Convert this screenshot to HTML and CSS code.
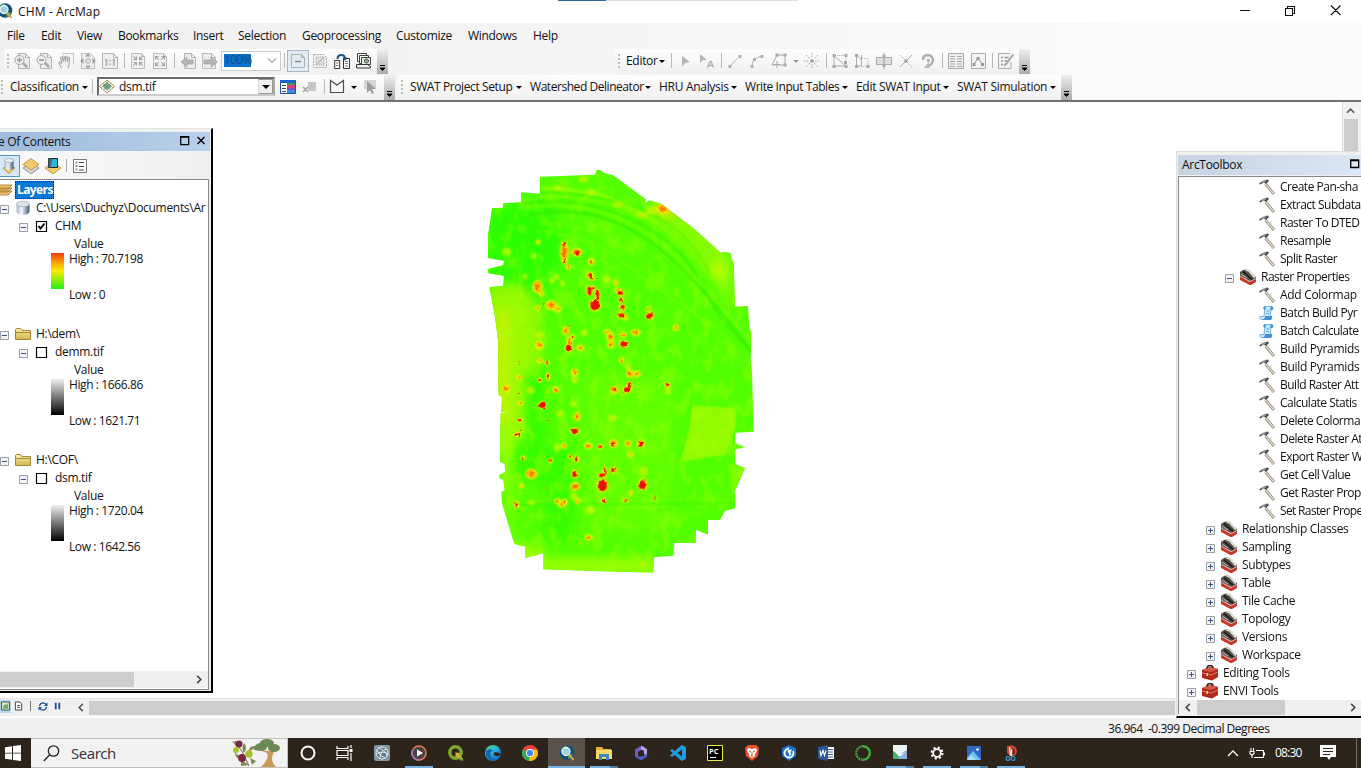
FILE: index.html
```html
<!DOCTYPE html>
<html lang="en">
<head>
<meta charset="utf-8">
<title>CHM - ArcMap</title>
<link rel="stylesheet" href="styles.css">
</head>
<body>
<svg class="defs" width="0" height="0">
  <defs>
    <linearGradient id="cyl"><stop offset="0" stop-color="#a9b4c4"/><stop offset=".4" stop-color="#f4f7fa"/><stop offset="1" stop-color="#3f5878"/></linearGradient>
    <linearGradient id="fold" x2="0" y2="1"><stop offset="0" stop-color="#f8efb0"/><stop offset="1" stop-color="#d3b64a"/></linearGradient>
    <linearGradient id="edgeg" x1="0" y1="0" x2="1" y2="1"><stop offset="0" stop-color="#4fd36a"/><stop offset=".4" stop-color="#2fb8d8"/><stop offset="1" stop-color="#0b57b0"/></linearGradient>
  </defs>
  <symbol id="page" viewBox="0 0 16 16"><path d="M4.500 .5h7l4 4v11h-11zM11.500 .5v4h4" fill="#ededed" stroke="#b3b3b3"/></symbol>
  <symbol id="zin" viewBox="0 0 16 16"><use href="#page"/><circle cx="5.500" cy="7" r="4.500" fill="#f0f0f0" stroke="#a6a6a6"/><path d="M9 10l4 4" stroke="#a6a6a6" stroke-width="2.500"/><path d="M3 7h5M5.500 4.500v5" stroke="#999" stroke-width="1.600"/></symbol>
  <symbol id="zout" viewBox="0 0 16 16"><use href="#page"/><circle cx="5.500" cy="7" r="4.500" fill="#f0f0f0" stroke="#a6a6a6"/><path d="M9 10l4 4" stroke="#a6a6a6" stroke-width="2.500"/><path d="M3 7h5" stroke="#999" stroke-width="1.600"/></symbol>
  <symbol id="hand" viewBox="0 0 16 16"><path d="M4.500 .5h11v11" fill="none" stroke="#c4c4c4"/><path d="M3.500 15.500L.8 9.500q1-1.500 3 1L2.500 4.500q1-1 1.500 0l1.500 4-.8-5q1-1 1.600 0l1.200 5V3.500q1-1 1.600 0l.3 5 .7-4q1-1 1.500 0L11 12l-1 3.500" fill="#efefef" stroke="#a0a0a0"/></symbol>
  <symbol id="full" viewBox="0 0 16 16"><path d="M1.500 .5h9l4 4v11h-13z" fill="#efefef" stroke="#bbb"/><path d="M8 0l3 3.500H5zM8 16l3-3.500H5zM0 8l3.500-3v6zM16 8l-3.500-3v6z" fill="#a3a3a3"/><circle cx="8" cy="8" r="2.500" fill="#ddd" stroke="#bbb"/></symbol>
  <symbol id="one" viewBox="0 0 16 16"><path d="M.5 .5h11l4 4v11H.5zM11.500 .5v4h4" fill="#efefef" stroke="#b3b3b3"/><path d="M4.500 6v7M3 7h1.500M12 6v7M10.500 7H12M8 7v1.500M8 10.500V12" fill="none" stroke="#aaa" stroke-width="1.500"/></symbol>
  <symbol id="inw" viewBox="0 0 16 16"><path d="M1.500 .5h10l3 3v12h-13zM11.500 .5v3h3" fill="#f0f0f0" stroke="#bbb"/><path d="M7 3v4H3zM9 3v4h4zM7 13V9H3zM9 13V9h4z" fill="#a3a3a3"/><path d="M3 3l3 3M13 3l-3 3M3 13l3-3M13 13l-3-3" stroke="#a3a3a3"/></symbol>
  <symbol id="outw" viewBox="0 0 16 16"><path d="M1.500 .5h10l3 3v12h-13zM11.500 .5v3h3" fill="#f0f0f0" stroke="#bbb"/><path d="M3 3h4L3 7zM13 3H9l4 4zM3 13h4L3 9zM13 13H9l4-4z" fill="#a3a3a3"/><path d="M4 4l3 3M12 4L9 7M4 12l3-3M12 12L9 9" stroke="#a3a3a3"/></symbol>
  <symbol id="prev" viewBox="0 0 16 16"><use href="#page"/><path d="M1 9l6-5v3h6v4H7v3z" fill="#b5b5b5" stroke="#999" stroke-width=".6"/></symbol>
  <symbol id="next" viewBox="0 0 16 16"><path d="M.5 .5h9l4 4v11H.5zM9.500 .5v4h4" fill="#ededed" stroke="#bbb"/><path d="M15.500 9L9 4v3H2v4h7v3z" fill="#b5b5b5" stroke="#999" stroke-width=".6"/></symbol>
  <symbol id="draft" viewBox="0 0 16 16"><path d="M1.500 1.500h10l3 3v10h-13zM11.500 1.500v3h3" fill="none" stroke="#a8b0b8"/><path d="M5 8.500h6" stroke="#888" stroke-width="1.500"/></symbol>
  <symbol id="focus" viewBox="0 0 16 16"><path d="M1.500 1.500h10l3 3v10h-13z" fill="#f0f0f0" stroke="#a8a8a8" stroke-dasharray="2 1"/><path d="M4 4h8v8H4z" fill="#ddd" stroke="#aaa" stroke-dasharray="1 1"/><path d="M4 12l8-8" stroke="#aaa"/></symbol>
  <symbol id="chg" viewBox="0 0 16 16"><path d="M.7 7.500h5v8h-5zM9.500 5.500h6v10h-6z" fill="#fff" stroke="#333"/><path d="M2 10h2.500M2 12.500h2.500M11 8.500h3M11 10.500h3M11 13h3" stroke="#777"/><path d="M3.500 6q0-4 4-4 3 0 3.500 3" fill="none" stroke="#1c5683" stroke-width="2"/><path d="M8.500 4.500h5L11 8z" fill="#1c5683"/></symbol>
  <symbol id="ddp" viewBox="0 0 16 16"><path d="M1.500.5h9v8h-9z" fill="#fff" stroke="#444"/><path d="M3.500 2.500h9v8h-9z" fill="#fff" stroke="#444"/><path d="M5.500 4.500h9v7h-9z" fill="#e5eedb" stroke="#444"/><circle cx="10.500" cy="8" r="2" fill="#9ab779" stroke="#456"/><path d="M.5 11.500h11l3 2v1.500H.5z" fill="#eee" stroke="#333"/></symbol>
  <symbol id="arrow" viewBox="0 0 16 16"><path d="M5 3v11l3-4 5-1z" fill="#b5b5b5"/></symbol>
  <symbol id="arrowa" viewBox="0 0 16 16"><path d="M1 1v9l3-3h4z" fill="#b5b5b5"/><path d="M8.500 14.500l2.500-6h1l2.500 6M9 12.500h5" fill="none" stroke="#b0b0b0" stroke-width="1.500"/></symbol>
  <symbol id="seg" viewBox="0 0 16 16"><path d="M3 13L13 3" stroke="#b5b5b5"/><path d="M1.500 12h3v3h-3zM11.500 2h3v3h-3z" fill="#b0b0b0"/></symbol>
  <symbol id="arc" viewBox="0 0 16 16"><path d="M3 13Q3 5 13 3" fill="none" stroke="#b5b5b5"/><path d="M1.500 12h3v3h-3zM11.500 2h3v3h-3zM4 5h3v3H4z" fill="#b0b0b0"/></symbol>
  <symbol id="trace" viewBox="0 0 16 16"><path d="M6 2h8v10H8M6 2L1 12h3M6 8v7M3 11.500h6" fill="none" stroke="#a8a8a8"/><path d="M4.500.5h3v3h-3zM12.500.5h3v3h-3zM12.500 10.500h3v3h-3z" fill="#aaa"/></symbol>
  <symbol id="burst" viewBox="0 0 16 16"><path d="M8 0v5M8 11v5M0 8h5M11 8h5M2 2l4 4M10 10l4 4M14 2l-4 4M6 10l-4 4" stroke="#adadad" stroke-dasharray="1.500 1"/><path d="M6.500 6.500h3v3h-3z" fill="#999"/></symbol>
  <symbol id="editv" viewBox="0 0 16 16"><path d="M2 2v11h12L2 3" fill="none" stroke="#aaa"/><path d="M3 2.500h11V12" fill="none" stroke="#aaa" stroke-dasharray="1 1"/><path d="M.5 1h3v3h-3zM12.500 1h3v3h-3zM12.500 12h3v3h-3zM.5 12h3v3h-3zM12 8h3v3h-3z" fill="#aaa"/></symbol>
  <symbol id="resh" viewBox="0 0 16 16"><path d="M2.500 2v11h5V2M2.500 2l5 5" fill="none" stroke="#aaa"/><path d="M8 5.500h6v8H8" fill="none" stroke="#aaa" stroke-dasharray="1 1"/><path d="M1 1h3v3H1zM1 12h3v3H1zM12.500 12h3v3h-3z" fill="#aaa"/></symbol>
  <symbol id="cut" viewBox="0 0 16 16"><path d="M.5 4.500h15v7H.5z" fill="#ddd" stroke="#aaa"/><path d="M8 0v16" stroke="#999"/><path d="M6.500 2h3v3h-3zM6.500 11h3v3h-3z" fill="#aaa"/></symbol>
  <symbol id="split" viewBox="0 0 16 16"><path d="M2 14L14 2" stroke="#aaa"/><path d="M2 2l12 12" stroke="#bbb" stroke-dasharray="2 1"/><path d="M6.500 6.500h3v3h-3z" fill="#999"/></symbol>
  <symbol id="rot" viewBox="0 0 16 16"><path d="M3 7q0-5 5-5 5 1 5 5.500Q12 12 8 13" fill="none" stroke="#b0b0b0" stroke-width="2.500"/><path d="M9 9v6H4zM7 6h3v3H7z" fill="#b5b5b5"/></symbol>
  <symbol id="attr" viewBox="0 0 16 16"><path d="M.5 .5h15v15H.5z" fill="#eee" stroke="#aaa"/><path d="M2 3.500h5M9 3.500h5M2 6h5M9 6h5M2 8.500h5M9 8.500h5M2 11h5M9 11h5M2 13.500h5M9 13.500h5" stroke="#aaa"/></symbol>
  <symbol id="sketch" viewBox="0 0 16 16"><path d="M1.500 .5h14v15h-14z" fill="#f3f3f3" stroke="#aaa"/><path d="M4 11l4-6 4 6" fill="none" stroke="#999"/><path d="M2.500 10h3v3h-3zM6.500 4h3v3h-3zM11 10h3v3h-3z" fill="#999"/></symbol>
  <symbol id="create" viewBox="0 0 16 16"><path d="M13 9v6.500H.5V.5h12" fill="#f3f3f3" stroke="#aaa"/><path d="M3 4.500h2M3 8h2M3 11.500h2M6.500 4.500h4M6.500 8h3" stroke="#999" stroke-width="1.500"/><path d="M15.500 1L8 11l-2 2" stroke="#aaa" stroke-width="2"/></symbol>
  <symbol id="minus" viewBox="0 0 9 9"><path d="M.5.5h8v8h-8z" fill="#f3f3f6" stroke="#9a9fa6"/><path d="M2 4.500h5" stroke="#3c5688"/></symbol>
  <symbol id="plus" viewBox="0 0 9 9"><path d="M.5.5h8v8h-8z" fill="#f3f3f6" stroke="#9a9fa6"/><path d="M2 4.500h5M4.500 2v5" stroke="#3c5688"/></symbol>
  <symbol id="db" viewBox="0 0 16 16"><path d="M1.500 4v8q1.500 3 6.500 3t6.500-3V4" fill="url(#cyl)"/><ellipse cx="8" cy="4" rx="6.500" ry="2.800" fill="#dce4ec" stroke="#99a6b5" stroke-width=".7"/></symbol>
  <symbol id="folder" viewBox="0 0 16 16"><path d="M.5 13.500v-10l1-1h4l1.500 2h8.500v9z" fill="url(#fold)" stroke="#a18831"/><path d="M1 6.500h14" stroke="#a18831"/></symbol>
  <symbol id="hammer" viewBox="0 0 16 16"><path d="M6.500 5l8.500 10" stroke="#8a8271" stroke-width="2.800"/><path d="M6.500 5L15 15" stroke="#e8e0cf" stroke-width="1.200"/><path d="M0 5q3-4 9-4.500l1 1.500-3 3-2-1.500L1 5.500z" fill="#4d5152"/><path d="M3 3.500l4-2" stroke="#b9c0c0"/></symbol>
  <symbol id="script" viewBox="0 0 16 16"><path d="M6 1.500h7l-1 4-1 6-1 3H2q-2-1-1-3h4z" fill="#cfe8fa" stroke="#5ba2d8" stroke-width=".8"/><path d="M6 1q-3 1-1 3.500h2zM12 1q4 1 1.500 4H11zM6 11h7q1 3-1.500 4H3q3-1 3-4z" fill="#3f92dc"/><path d="M7.500 6h3M7 8.500h3" stroke="#5a9fd2"/></symbol>
  <symbol id="tset" viewBox="0 0 16 16"><path d="M0 3l3-2 4-1 9 8v3l-5 2L0 8z" fill="#55514d"/><path d="M0 7.500L10 13l6-3v3l-5 3h-1.500L0 11z" fill="#c8382a"/><path d="M0 7l10 5.500 6-3" fill="none" stroke="#efc0b4" stroke-width=".9"/><path d="M3 2.500l9 8" stroke="#191514" stroke-width="1.500"/><path d="M5.500 1q3-.5 5 2.500l4.500 5" fill="none" stroke="#dedbd0" stroke-width="2.200"/><path d="M1 5l6 4" stroke="#c2beb6"/></symbol>
  <symbol id="tbox" viewBox="0 0 16 16"><path d="M0 5l8-3 8 2v8l-6 3.500L0 13z" fill="#b4271b"/><path d="M0 5l9 2 7-3-8-2.500z" fill="#d65a49"/><path d="M5 3.500q0-3 3-3t3 2.500" fill="none" stroke="#282322" stroke-width="1.600"/><path d="M0 8l9 2 7-3" fill="none" stroke="#ea9585" stroke-width=".8"/><path d="M4.500 8h1.500v3H4.500z" fill="#e9d6b2"/></symbol>
  <symbol id="lyr" viewBox="0 0 16 16"><path d="M0 10l8-5 8 5-8 6z" fill="#d4d8dc" stroke="#777" stroke-width=".8"/><path d="M0 6.500L8 .5l8 6L8 12z" fill="#f2ca70" stroke="#b1842f" stroke-width=".8"/></symbol>
  <symbol id="dia" viewBox="0 0 16 16"><path d="M0 10l8-5 8 5-8 6z" fill="#f2ca70" stroke="#b1842f" stroke-width=".8"/></symbol>
  <symbol id="grip" viewBox="0 0 3 16"><path d="M0 1h2v2H0zM0 5h2v2H0zM0 9h2v2H0zM0 13h2v2H0z" fill="#b9b9b9"/></symbol>
  <symbol id="lens" viewBox="0 0 16 16"><circle cx="8" cy="7.500" r="7.300" fill="#124f78"/><path d="M2 4q3-4 6-3l-2 4-4 2zM9 10q5-2 5 0-2 4-5 4z" fill="#3b946b"/><circle cx="7" cy="6.500" r="4" fill="#9bcfe2" stroke="#f2f7f7" stroke-width="1.300"/><path d="M10 9.500L14.500 15" stroke="#d5a94a" stroke-width="2"/></symbol>
</svg>

<div class="titlebar">
  <svg class="app" viewBox="0 0 16 16"><use href="#lens"/></svg>
  <span class="apptitle">CHM - ArcMap</span>
  <span class="peek"></span><span class="peek2"></span>
  <svg class="winbtns" viewBox="0 0 121 23"><path d="M11 10.500h10M56.500 8.500h7v7h-7zM58.500 8V6.500h7v7H64M102 5.500l9.500 9.500M111.500 5.500L102 15" fill="none" stroke="#111" stroke-width="1.100"/></svg>
</div>

<div class="bars">
  <div class="menu">
    <span class="m1">File</span><span class="m2">Edit</span><span class="m3">View</span><span class="m4">Bookmarks</span><span class="m5">Insert</span><span class="m6">Selection</span><span class="m7">Geoprocessing</span><span class="m8">Customize</span><span class="m9">Windows</span><span>Help</span>
  </div>
  <div class="row row1">
    <div class="tools t-layout">
      <svg class="grip"><use href="#grip"/></svg>
      <i class="b"><svg><use href="#zin"/></svg></i><i class="b"><svg><use href="#zout"/></svg></i><i class="b"><svg><use href="#hand"/></svg></i><i class="b"><svg><use href="#full"/></svg></i><i class="b"><svg><use href="#one"/></svg></i>
      <i class="sep"></i>
      <i class="b"><svg><use href="#inw"/></svg></i><i class="b"><svg><use href="#outw"/></svg></i>
      <i class="sep"></i>
      <i class="b"><svg><use href="#prev"/></svg></i><i class="b"><svg><use href="#next"/></svg></i>
      <div class="pct"><span>100%</span><svg viewBox="0 0 10 6"><path d="M1 .5l4 4 4-4" fill="none" stroke="#aaa" stroke-width="1.200"/></svg></div>
      <i class="sep"></i>
      <i class="b on"><svg><use href="#draft"/></svg></i><i class="b"><svg><use href="#focus"/></svg></i><i class="b"><svg><use href="#chg"/></svg></i><i class="b"><svg><use href="#ddp"/></svg></i>
      <i class="cap"><svg viewBox="0 0 7 8"><path d="M1 1.500h5M1 4h5L3.500 6.500z" stroke="#000" fill="#000"/></svg></i>
    </div>
    <div class="tools t-editor">
      <svg class="grip"><use href="#grip"/></svg>
      <span class="drop w-ed">Editor<b></b></span>
      <i class="sep"></i>
      <i class="b"><svg><use href="#arrow"/></svg></i><i class="b"><svg><use href="#arrowa"/></svg></i>
      <i class="sep"></i>
      <i class="b"><svg><use href="#seg"/></svg></i><i class="b"><svg><use href="#arc"/></svg></i><i class="b"><svg><use href="#trace"/></svg></i><i class="dd dim"></i><i class="b"><svg><use href="#burst"/></svg></i>
      <i class="sep"></i>
      <i class="b"><svg><use href="#editv"/></svg></i><i class="b"><svg><use href="#resh"/></svg></i><i class="b"><svg><use href="#cut"/></svg></i><i class="b"><svg><use href="#split"/></svg></i><i class="b"><svg><use href="#rot"/></svg></i>
      <i class="sep"></i>
      <i class="b"><svg><use href="#attr"/></svg></i><i class="b"><svg><use href="#sketch"/></svg></i>
      <i class="sep"></i>
      <i class="b"><svg><use href="#create"/></svg></i>
      <i class="cap"><svg viewBox="0 0 7 8"><path d="M1 1.500h5M1 4h5L3.500 6.500z" stroke="#000" fill="#000"/></svg></i>
    </div>
  </div>
  <div class="row row2">
    <div class="tools t-class">
      <svg class="grip"><use href="#grip"/></svg>
      <span class="drop w-cl">Classification<b></b></span>
      <i class="sep"></i>
      <div class="combo">
        <svg class="ras" viewBox="0 0 16 16"><path d="M0 8l8-7 8 7-8 7z" fill="#fff" stroke="#9d7d45"/><path d="M3 8l5-4.500L13 8l-5 4.500z" fill="#61b8a0"/><path d="M4 5l7 6M7 3l7 6M5 11l7-6M2 9l7-6" stroke="#8c6a35" stroke-width=".8"/></svg>
        <span>dsm.tif</span><i class="cbtn"></i>
      </div>
      <i class="b cls"><svg viewBox="0 0 16 16"><path d="M.5 1.500h15v13H.5z" fill="#fff" stroke="#1c4c9a"/><path d="M0 1h16v3H0z" fill="#1565c8"/><path d="M7 4h8v4H7z" fill="#3f9c50"/><path d="M7 6h8v3H7z" fill="#d9417b"/><path d="M7 9h8v3H7z" fill="#7b4bd0"/><path d="M7 11h8v3H7z" fill="#3c8de0"/><path d="M2 6.500h4M2 9.500h4M2 12.500h4" stroke="#345"/></svg></i>
      <i class="b"><svg viewBox="0 0 16 16"><path d="M6 3h8v9H6z" fill="#c6c6c6"/><path d="M1 8l5 5M6 8l-5 5" stroke="#a5a5a5" stroke-width="1.500"/></svg></i>
      <i class="sep"></i>
      <i class="b poly"><svg viewBox="0 0 16 16"><path d="M1.500 1.500L8 6l6.500-4.500v12h-13z" fill="#f8f8f8" stroke="#4a4a4a" stroke-width="1.200"/></svg></i><i class="dd"></i>
      <i class="b sel"><svg viewBox="0 0 16 16"><path d="M1 1h12v9H1z" fill="#d6d6d6"/><path d="M4 2v12l3-3 2 4 2-1-2-4h4z" fill="#9c9c9c"/></svg></i>
      <i class="cap"><svg viewBox="0 0 7 8"><path d="M1 1.500h5M1 4h5L3.500 6.500z" stroke="#000" fill="#000"/></svg></i>
    </div>
    <div class="tools t-swat">
      <svg class="grip"><use href="#grip"/></svg>
      <span class="drop s1">SWAT Project Setup<b></b></span><span class="drop s2">Watershed Delineator<b></b></span><span class="drop s3">HRU Analysis<b></b></span><span class="drop s4">Write Input Tables<b></b></span><span class="drop s5">Edit SWAT Input<b></b></span><span class="drop s6">SWAT Simulation<b></b></span>
      <i class="cap"><svg viewBox="0 0 7 8"><path d="M1 1.500h5M1 4h5L3.500 6.500z" stroke="#000" fill="#000"/></svg></i>
    </div>
  </div>
</div>

<div class="work">
  <div class="canvas">
    <svg class="map" viewBox="0 0 870 1290">
      <defs>
        <clipPath id="edge"><path d="M180 50L345 44 350 30 362 30 370 38 400 46 497 118 497 130 508 121 545 132 640 205 722 278 735 276 752 280 754 295 762 310 762 340 765 440 804 438 808 500 814 520 812 600 816 640 818 710 821 815 766 818 766 850 795 862 766 868 766 912 795 925 762 1000 766 1000 766 1045 735 1053 720 1080 684 1080 684 1124 648 1110 648 1149 583 1149 580 1187 522 1192 520 1238 345 1233 190 1228 190 1180 136 1194 136 1160 103 1152 66 1030 64 997 74 990 70 960 58 955 58 945 76 935 74 912 60 905 62 760 78 760 78 757 64 757 66 710 56 705 54 650 54 540 45 470 28 382 70 377 72 347 25 340 24 327 70 316 72 302 24 294 24 225 30 190 36 145 69 143 69 130 123 127 123 97 180 101z"/></clipPath>
        <filter id="soft" x="-50%" y="-50%" width="200%" height="200%" color-interpolation-filters="sRGB"><feGaussianBlur stdDeviation="16"/></filter>
        <filter id="glow" x="-10%" y="-10%" width="120%" height="120%" color-interpolation-filters="sRGB"><feGaussianBlur stdDeviation="3"/></filter>
        <filter id="line" x="-10%" y="-10%" width="120%" height="120%" color-interpolation-filters="sRGB"><feGaussianBlur stdDeviation="2.500"/></filter>
        <filter id="rough" x="0" y="0" width="870" height="1290" filterUnits="userSpaceOnUse" color-interpolation-filters="sRGB"><feTurbulence type="fractalNoise" baseFrequency=".09" numOctaves="2" seed="4"/><feDisplacementMap in="SourceGraphic" scale="14" xChannelSelector="R" yChannelSelector="G"/></filter>
        <filter id="noise" x="0" y="0" width="870" height="1290" filterUnits="userSpaceOnUse" color-interpolation-filters="sRGB"><feTurbulence type="fractalNoise" baseFrequency=".03 .018" numOctaves="5" seed="8"/><feColorMatrix values="0 0 0 0 .7  0 0 0 0 1  0 0 0 0 0  4 0 0 0 -1.850"/></filter>
      </defs>
      <g clip-path="url(#edge)">
        <path d="M0 0h870v1290H0z" fill="#51ff00"/>
        <g filter="url(#soft)">
          <path d="M20 130h190l60 130-90 170 10 520-80-30V370H20z" fill="#2cfd00"/>
          <path d="M110 620h90v340h-90zM190 860h90v290h-90z" fill="#36fc00"/>
          <path d="M20 380l100-10 55 60 10 180-50 40 0 190-60 20H30z" fill="#95fa00"/>
          <path d="M40 450h55v340H55z" fill="#bdf500"/>
          <path d="M55 820h40v320l100 30-10 60H100z" fill="#9cff00"/>
          <path d="M190 1195h330v50H190z" fill="#9aff00"/>
          <path d="M500 115l60 15 200 160v170l-60-110-170-180z" fill="#84fc00"/>
          <path d="M300 640h280v480H330z" fill="#60ff00"/>
          <ellipse cx="715" cy="335" rx="26" ry="24" fill="#d0fa00"/>
          <ellipse cx="560" cy="150" rx="34" ry="18" fill="#ecdc00"/>
        </g>
        <path d="M636 737l130 6 2 50-28 90-138 22 22-95z" fill="#93fb00" filter="url(#glow)"/>
        <path d="M745 910l50 15-38 80z" fill="#80fb00" filter="url(#glow)"/>
        <path d="M0 0h870v1290H0z" filter="url(#noise)" opacity=".32"/>
        <g fill="none" filter="url(#line)">
          <path d="M185 85l60 2 120 18 95 40 70 45" stroke="#92ff00" stroke-width="9"/>
          <path d="M130 130q250-30 440 120 80 75 110 150t150 190" stroke="#30ee00" stroke-width="4"/>
          <path d="M150 165q220-40 400 110 120 100 270 310" stroke="#2eea00" stroke-width="4"/>
          <path d="M130 145q230-40 420 110 130 120 270 300" stroke="#7cff00" stroke-width="4"/>
          <path d="M170 110q240-10 400 110 90 80 90 140" stroke="#80ff00" stroke-width="5"/>
          <path d="M170 98q220-10 400 95 80 60 120 150" stroke="#38f200" stroke-width="3"/>
          <path d="M190 215q160 20 240 90t280 200l110 120" stroke="#75ff00" stroke-width="4"/>
          <path d="M190 190q170 0 300 120t300 300" stroke="#7aff00" stroke-width="3"/>
          <path d="M190 150q190-10 330 100t300 330" stroke="#3aec00" stroke-width="3"/>
          <path d="M632 735q-2 110-50 180" stroke="#32f000" stroke-width="3"/>
          <path d="M90 1035l680-5" stroke="#3af600" stroke-width="4"/>
        </g>
        <g id="fringe" filter="url(#glow)"></g>
        <g id="cores" filter="url(#rough)"></g>
      </g>
    </svg>
  </div>
  <div class="vscroll"><svg viewBox="0 0 10 6"><path d="M1 5l4-4 4 4" fill="none" stroke="#555" stroke-width="1.700"/></svg><i></i></div>
</div>

<div class="viewbar">
  <i class="vb sel-view"><svg viewBox="0 0 10 10"><path d="M.5.5h9v9h-9z" fill="#dbe8c0" stroke="#345"/><path d="M2 7l2-4 2 1 2-2v6H2z" fill="#79a866"/></svg></i>
  <i class="vb"><svg viewBox="0 0 10 10"><path d="M1.500.5h5l2 2v7h-7zM3.500 4.500h3M3.500 6.500h3" fill="#fff" stroke="#333"/></svg></i>
  <i class="vsep"></i>
  <i class="vb rf"><svg viewBox="0 0 10 10"><path d="M1 4.500Q2 1 5 1t4 2.500M9 5.500Q8 9 5 9T1 6.500" fill="none" stroke="#1b4f96" stroke-width="1.400"/><path d="M10 .5v4H6zM0 9.500v-4h4z" fill="#1b4f96"/></svg></i>
  <i class="vb"><svg viewBox="0 0 10 10"><path d="M2 1.500h2v7H2zM6 1.500h2v7H6z" fill="#1a4a9c"/></svg></i>
  <svg class="lft" viewBox="0 0 6 10"><path d="M5 1L1 5l4 4" fill="none" stroke="#555" stroke-width="1.700"/></svg>
  <i class="hthumb"></i>
</div>
<div class="status"><span>36.964&nbsp; -0.399 Decimal Degrees</span></div>

<div class="taskbar">
  <div class="start"><svg viewBox="0 0 16 16"><path d="M0 2.200l7-1v6.500H0zM8 1l8-1v7.700H8zM0 8.500h7v6.300l-7-1zM8 8.500h8V16l-8-1z" fill="#fff"/></svg></div>
  <div class="search">
    <svg class="mag" viewBox="0 0 17 17"><circle cx="10.500" cy="6" r="5.200" fill="none" stroke="#222" stroke-width="1.300"/><path d="M6.800 9.800L.8 16" stroke="#222" stroke-width="1.300"/></svg>
    <span>Search</span>
    <svg class="olive" viewBox="0 0 50 28"><path d="M3 2q8 10 14 25" stroke="#75603a" fill="none"/><path d="M0 2l8 3-4 2zM12 4q4 4 0 10-3-5 0-10zM2 13l8 6H5zM17 12q5-1 6-5-6 0-6 5zM9 21l8 5-8 1zM18 19l6 3-4 4z" fill="#7d8a55"/><circle cx="7" cy="5" r="3.500" fill="#762b45"/><circle cx="4" cy="11" r="3" fill="#a9c42b"/><circle cx="17" cy="15" r="3.700" fill="#a4bf27"/><circle cx="10" cy="19" r="3.900" fill="#7c2440"/><path d="M29 28q9-9 6-14l-8-3 11 1 6-3-3 6q-3 8 3 13z" fill="#c79a5c"/><g fill="#6c8a54"><ellipse cx="29" cy="8" rx="6" ry="4"/><ellipse cx="35" cy="4" rx="7" ry="4"/><ellipse cx="42" cy="9" rx="6" ry="4"/><ellipse cx="25" cy="9" rx="3.500" ry="2.500"/></g></svg>
  </div>
  <div class="apps">
    <i><svg viewBox="0 0 16 16"><circle cx="8" cy="8" r="6.500" fill="none" stroke="#fff" stroke-width="2"/></svg></i>
    <i><svg viewBox="0 0 16 16"><path d="M0 1v2.500h11V1M0 15v-2.500h11V15M0 5.500h11v5H0zM14 0v3M14 8v8" fill="none" stroke="#fff" stroke-width="1.200"/><path d="M12.500 4h3v3h-3z" fill="#fff"/></svg></i>
    <i><svg viewBox="0 0 16 16"><rect width="16" height="16" rx="2" fill="#8395a2"/><circle cx="8" cy="8" r="6" fill="#667b8a" stroke="#e3eaee"/><path d="M4 3q8 2 9 8M2 9q6-4 12 0M6 14Q6 5 13 4M3 5q2 6 8 8" fill="none" stroke="#e3eaee"/></svg></i>
    <i class="run"><svg viewBox="0 0 16 16"><circle cx="8" cy="8" r="7" fill="#4a4247" stroke="#e07c54" stroke-width="1.500"/><path d="M1.500 5a7 7 0 000 6q2 4 7 4" fill="none" stroke="#a777c9" stroke-width="1.500"/><path d="M6 4.500L12 8l-6 3.500z" fill="#fff"/></svg></i>
    <i><svg viewBox="0 0 16 16"><circle cx="7.500" cy="7.500" r="5.700" fill="none" stroke="#7ca82b" stroke-width="3.400"/><path d="M7.500 7.500l5 .5-1.500 1.500 4 4-2 2-4-4-1.500 1z" fill="#d9b236"/><path d="M12 12l4 3.500h-3.500l-2-2z" fill="#7ca82b"/></svg></i>
    <i><svg viewBox="0 0 16 16"><circle cx="8" cy="8" r="8" fill="url(#edgeg)"/><path d="M1 6q3-3 7-1-4 2-2 6 2 4 7 3-4 3-8 1-5-3-4-9z" fill="#1464b8"/><path d="M8.500 9.500q1-1 1-2.500 3 0 6.500 1.500-1 2.500-4 2.500-3 0-3.500-1.500z" fill="#2d241d"/></svg></i>
    <i><svg viewBox="0 0 16 16"><circle cx="8" cy="8" r="8" fill="#ea4335"/><path d="M8 8L1 4a8 8 0 006 12z" fill="#34a853"/><path d="M8 8h8a8 8 0 01-9 8z" fill="#fbbc05"/><path d="M8 4.500h7A8 8 0 0116 8H8z" fill="#fbbc05"/><circle cx="8" cy="8" r="3.700" fill="#4285f4" stroke="#fff"/></svg></i>
    <i class="run act"><svg viewBox="0 0 16 16"><use href="#lens"/></svg></i>
    <i class="run two"><svg viewBox="0 0 16 16"><path d="M0 2h6l1.500 2H15v10H0z" fill="#e6b23a"/><path d="M0 5h16v9H0z" fill="#fbd668"/><path d="M3 15V9h10v6h-3v-3H6v3z" fill="#3f87bf"/></svg></i>
    <i><svg viewBox="0 0 16 16"><path d="M8.500.5L2 4.500v7L5 13V7l5-3z" fill="#7459c7"/><path d="M8.500.5L14 4v7.500L11 9V6L7.500 4z" fill="#b2a5ea"/><path d="M2 11.500l6 4 6-4V9l-5 2.500z" fill="#4a62cb"/></svg></i>
    <i><svg viewBox="0 0 16 16"><path d="M11.500 0L16 2v12l-4.500 2L0 5.500 2 4l10 7.500v-7L2 12 0 10.500z" fill="#229ce0"/></svg></i>
    <i><svg class="pc" viewBox="0 0 16 16"><path d="M.5.5h15v15H.5z" fill="#000" stroke="#e5ee46"/><text x="2" y="8.500">PC</text><path d="M3 12.500h6" stroke="#fff"/></svg></i>
    <i><svg viewBox="0 0 16 16"><path d="M4 0h8l3 3-1 8-6 5-6-5-1-8z" fill="#f0512d"/><path d="M4 3l4 1 4-1 1 3-2 3v2l-3 2-3-2V9L3 6z" fill="#fff"/><path d="M5 6l2 1M11 6L9 7M8 7v3l-1 1h2" stroke="#f0512d" fill="none"/></svg></i>
    <i><svg viewBox="0 0 16 16"><path d="M1 3l7-3 7 3v8l-7 5-7-5z" fill="#1774c8"/><path d="M8 3.500A4.500 4.500 0 1012 6" fill="none" stroke="#fff" stroke-width="1.800"/><path d="M7 5l4-.5-1.500 3 1 2L8 11V8L6.500 7z" fill="#fff"/></svg></i>
    <i><svg viewBox="0 0 16 16"><path d="M8 2h8v12H8z" fill="#fff"/><path d="M10 4.500h5M10 7h5M10 9.500h5M10 12h5" stroke="#345d9b"/><path d="M0 2l10-2v16L0 14z" fill="#2b5797"/><path d="M2 5.500l1 5 2-5 1.500 5 1.500-5" fill="none" stroke="#fff" stroke-width="1.200"/></svg></i>
    <i><svg viewBox="0 0 16 16"><path d="M8 1.200A6.800 6.800 0 118 14.800" fill="none" stroke="#42a83a" stroke-width="2.400"/><path d="M8 1.200A6.800 6.800 0 008 14.800" fill="none" stroke="#42a83a" stroke-width="2.200" stroke-dasharray="2 .7"/></svg></i>
    <i class="run two"><svg viewBox="0 0 16 16"><path d="M1 0h14v14H1z" fill="#eef4f1"/><path d="M1 6q5 2 7 8H1z" fill="#40b66c"/><path d="M15 5q-7 3-9 9h9z" fill="#86b0de"/><path d="M1 5q7 8 14 0l-6 6H7z" fill="#fff"/></svg></i>
    <i class="run"><svg viewBox="0 0 16 16"><circle cx="8" cy="8" r="5" fill="none" stroke="#fff" stroke-width="3" stroke-dasharray="1.960 1.960"/><circle cx="8" cy="8" r="3.800" fill="none" stroke="#fff" stroke-width="1.800"/></svg></i>
    <i class="run two"><svg viewBox="0 0 16 16"><path d="M1 1h14v14H1z" fill="#3168c8"/><path d="M1 13l6-7 8 9H1z" fill="#74c3f4"/><path d="M1 15l4-5 5 5z" fill="#a8def9"/><circle cx="11.500" cy="4.500" r="1.300" fill="#fff"/></svg></i>
    <i class="run"><svg viewBox="0 0 16 16"><path d="M4 1q9-2 10 5 0 5-5 5-3 0-5-3z" fill="#d4482f"/><path d="M7 5q3-2 4 1t-3 3" fill="none" stroke="#2d241c" stroke-width="1.300"/><path d="M6.500 2l1 9M8.500 4v7" stroke="#e5e9ed" stroke-width="1.300"/><circle cx="5" cy="13.500" r="1.900" fill="none" stroke="#399bd6" stroke-width="1.200"/><circle cx="10" cy="13.500" r="1.900" fill="none" stroke="#399bd6" stroke-width="1.200"/></svg></i>
  </div>
  <div class="tray">
    <svg class="up" viewBox="0 0 12 8"><path d="M1 7l5-5 5 5" fill="none" stroke="#fff" stroke-width="1.300"/></svg>
    <svg class="bat" viewBox="0 0 16 12"><path d="M7 3.500h7.500v7H5M15.500 5.500v3M1 4.500h4v2L3 8.500 1 6.500zM2 4V1M4.500 4V1M3 8v3" fill="none" stroke="#fff" stroke-width="1.100"/></svg>
    <span>08:30</span>
    <svg class="note" viewBox="0 0 16 16"><path d="M0 0h16v12h-5l-2 3-2-3H0z" fill="#fff"/><path d="M3 3.500h10M3 6.500h10M3 9.500h7" stroke="#2d241d"/></svg>
    <i class="desk"></i>
  </div>
</div>

<div class="toc">
  <div class="ptitle"><span>e Of Contents</span><svg viewBox="0 0 30 12"><path d="M1.700 1.700h8v8h-8z" fill="none" stroke="#000" stroke-width="1.200"/><path d="M1 2h9M18.500 2l7 7M25.500 2l-7 7" stroke="#000" stroke-width="1.400"/></svg></div>
  <div class="ptools">
    <i class="lt on2"><svg viewBox="0 0 16 16"><path d="M2 10l6-2 6 2-6 5.500z" fill="#f2ca70" stroke="#b1842f" stroke-width=".8"/><path d="M3.500 2.500v8q4.500 3 9 0v-8" fill="url(#cyl)"/><ellipse cx="8" cy="2.500" rx="4.500" ry="2" fill="#e7edf3" stroke="#8996a6" stroke-width=".6"/></svg></i>
    <i class="lt"><svg viewBox="0 0 16 16"><use href="#lyr"/></svg></i>
    <i class="lt"><svg viewBox="0 0 16 16"><use href="#dia"/><path d="M3.500.5h9v9h-9z" fill="#27b7dc" stroke="#222"/><path d="M3.500.5h4l-2 9h-2z" fill="#4a6170"/></svg></i>
    <i class="lsep"></i>
    <i class="lt"><svg viewBox="0 0 14 16"><path d="M.5 1.500h13v13H.5z" fill="#fff" stroke="#777"/><path d="M2.500 3.500h2v2h-2zM2.500 7h2v2h-2zM2.500 10.500h2v2h-2z" fill="#89a"/><path d="M6 4.500h5M6 8.500h5M6 12h5" stroke="#445"/></svg></i>
  </div>
  <div class="tree">
    <div class="r"><svg class="g16 lay" viewBox="0 0 16 16"><path d="M0 12l3-3h13l-4 4H0zM0 9l3-3h13l-4 4H0zM0 6l3-3h13l-4 4H0z" fill="#f1c467" stroke="#9b742c" stroke-width=".8"/></svg><span class="hl">Layers</span></div>
    <div class="r"><svg class="ex"><use href="#minus"/></svg><svg class="g16 gap1"><use href="#db"/></svg><span>C:\Users\Duchyz\Documents\Ar</span></div>
    <div class="r in"><svg class="ex"><use href="#minus"/></svg><svg class="ck" viewBox="0 0 11 11"><path d="M.5.5h10v10H.5z" fill="#fff" stroke="#000" stroke-width="1.200"/><path d="M2.500 5l2 2.500 4-5" fill="none" stroke="#000" stroke-width="1.800"/></svg><span>CHM</span></div>
    <div class="r val">Value</div>
    <div class="ramp"><i class="col"></i><div><span>High : 70.7198</span><span>Low : 0</span></div></div>
    <div class="r"><svg class="ex"><use href="#minus"/></svg><svg class="g16 gap1"><use href="#folder"/></svg><span>H:\dem\</span></div>
    <div class="r in"><svg class="ex"><use href="#minus"/></svg><svg class="ck" viewBox="0 0 11 11"><path d="M.5.5h10v10H.5z" fill="#fff" stroke="#000" stroke-width="1.200"/></svg><span>demm.tif</span></div>
    <div class="r val">Value</div>
    <div class="ramp"><i></i><div><span>High : 1666.86</span><span>Low : 1621.71</span></div></div>
    <div class="r"><svg class="ex"><use href="#minus"/></svg><svg class="g16 gap1"><use href="#folder"/></svg><span>H:\COF\</span></div>
    <div class="r in"><svg class="ex"><use href="#minus"/></svg><svg class="ck" viewBox="0 0 11 11"><path d="M.5.5h10v10H.5z" fill="#fff" stroke="#000" stroke-width="1.200"/></svg><span>dsm.tif</span></div>
    <div class="r val">Value</div>
    <div class="ramp"><i></i><div><span>High : 1720.04</span><span>Low : 1642.56</span></div></div>
    <div class="tscroll"><i></i><svg viewBox="0 0 6 10"><path d="M1 1l4 4-4 4" fill="none" stroke="#444" stroke-width="1.700"/></svg></div>
  </div>
</div>

<div class="atb">
  <div class="atitle"><span>ArcToolbox</span><svg viewBox="0 0 9 10"><path d="M.7 1.500h8v7h-8zM0 1h9" fill="none" stroke="#000" stroke-width="1.300"/></svg></div>
  <div class="alist">
    <div class="a l3"><svg><use href="#hammer"/></svg>Create Pan-sha</div>
    <div class="a l3"><svg><use href="#hammer"/></svg>Extract Subdata</div>
    <div class="a l3"><svg><use href="#hammer"/></svg>Raster To DTED</div>
    <div class="a l3"><svg><use href="#hammer"/></svg>Resample</div>
    <div class="a l3"><svg><use href="#hammer"/></svg>Split Raster</div>
    <div class="a l2b"><svg class="ex"><use href="#minus"/></svg><svg><use href="#tset"/></svg>Raster Properties</div>
    <div class="a l3 wide"><svg><use href="#hammer"/></svg>Add Colormap</div>
    <div class="a l3"><svg><use href="#script"/></svg>Batch Build Pyr</div>
    <div class="a l3"><svg><use href="#script"/></svg>Batch Calculate</div>
    <div class="a l3 wide"><svg><use href="#hammer"/></svg>Build Pyramids</div>
    <div class="a l3 wide"><svg><use href="#hammer"/></svg>Build Pyramids</div>
    <div class="a l3"><svg><use href="#hammer"/></svg>Build Raster Att</div>
    <div class="a l3"><svg><use href="#hammer"/></svg>Calculate Statis</div>
    <div class="a l3"><svg><use href="#hammer"/></svg>Delete Colorma</div>
    <div class="a l3"><svg><use href="#hammer"/></svg>Delete Raster At</div>
    <div class="a l3"><svg><use href="#hammer"/></svg>Export Raster W</div>
    <div class="a l3"><svg><use href="#hammer"/></svg>Get Cell Value</div>
    <div class="a l3"><svg><use href="#hammer"/></svg>Get Raster Prop</div>
    <div class="a l3 tight"><svg><use href="#hammer"/></svg>Set Raster Prope</div>
    <div class="a l2"><svg class="ex"><use href="#plus"/></svg><svg><use href="#tset"/></svg>Relationship Classes</div>
    <div class="a l2"><svg class="ex"><use href="#plus"/></svg><svg><use href="#tset"/></svg>Sampling</div>
    <div class="a l2"><svg class="ex"><use href="#plus"/></svg><svg><use href="#tset"/></svg>Subtypes</div>
    <div class="a l2"><svg class="ex"><use href="#plus"/></svg><svg><use href="#tset"/></svg>Table</div>
    <div class="a l2"><svg class="ex"><use href="#plus"/></svg><svg><use href="#tset"/></svg>Tile Cache</div>
    <div class="a l2"><svg class="ex"><use href="#plus"/></svg><svg><use href="#tset"/></svg>Topology</div>
    <div class="a l2"><svg class="ex"><use href="#plus"/></svg><svg><use href="#tset"/></svg>Versions</div>
    <div class="a l2"><svg class="ex"><use href="#plus"/></svg><svg><use href="#tset"/></svg>Workspace</div>
    <div class="a l1"><svg class="ex"><use href="#plus"/></svg><svg><use href="#tbox"/></svg>Editing Tools</div>
    <div class="a l1"><svg class="ex"><use href="#plus"/></svg><svg><use href="#tbox"/></svg>ENVI Tools</div>
    <div class="ascroll"><svg viewBox="0 0 6 10"><path d="M5 1L1 5l4 4" fill="none" stroke="#444" stroke-width="1.700"/></svg><i></i><svg viewBox="0 0 6 10"><path d="M1 1l4 4-4 4" fill="none" stroke="#444" stroke-width="1.700"/></svg></div>
  </div>
</div>
<script src="map.js"></script>
</body>
</html>
```
FILE: styles.css
```css
* { box-sizing: border-box; }
html, body { margin: 0; height: 768px; overflow: hidden; }
body { display: flex; flex-direction: column; width: 1361px; position: relative; background: #fff; color: #111;
  font: 12px/18px "Open Sans", "Noto Sans", sans-serif; letter-spacing: -0.3px; white-space: nowrap; }
svg { display: block; flex: none; overflow: visible; }
i { flex: none; font-style: normal; }
.defs { position: absolute; }

.titlebar { height: 23px; flex: none; display: flex; }
.app { width: 16px; height: 16px; margin: 3px 0 0 -3px; }
.apptitle { width: 540px; padding: 3px 0 0 5px; margin-right: 5px; letter-spacing: 0.15px; }
.peek { width: 48px; height: 1px; background: #2a6aa3; }
.peek2 { width: 192px; height: 1px; background: #ddd; }
.winbtns { width: 121px; height: 23px; margin-left: auto; margin-right: 11px; }

.bars { height: 79px; flex: none; background: linear-gradient(90deg, #f0f0f0, #f4f4f4 40%, #fafafa 85%); border-bottom: 2px solid #707070; }
.menu { height: 26px; display: flex; padding: 4px 0 0 7px; }
.m1 { width: 34px; } .m2 { width: 36px; } .m3 { width: 41px; } .m4 { width: 75px; } .m5 { width: 45px; }
.m6 { width: 64px; } .m7 { width: 94px; } .m8 { width: 72px; } .m9 { width: 65px; }
.row { display: flex; height: 25px; }
.row2 { height: 26px; padding-top: 1px; }
.tools { display: flex; height: 25px; padding-bottom: 2px; align-items: center; background: linear-gradient(#fdfdfd, #f0f0f0); flex: none; }
.t-layout { margin-left: 4px; width: 384px; padding-left: 3px; }
.t-editor { margin-left: 227px; width: 415px; padding-left: 3px; }
.t-class { width: 395px; padding-left: 1px; }
.t-swat { margin-left: 3px; width: 674px; padding-left: 3px; }
.grip { width: 3px; height: 16px; margin-right: 1px; }
.t-editor .grip { margin-right: 5px; }
.t-class .grip { margin-right: 6px; }
.t-swat .grip { margin-right: 6px; }
.b { width: 22px; height: 22px; display: grid; place-items: center; }
.b svg { width: 16px; height: 16px; }
.b.on { background: #e3ebf2; border: 1px solid #a7b6c4; }
.sep { width: 6px; height: 15px; display: flex; justify-content: center; }
.sep::after { content: ""; width: 1px; background: #b8b8b8; }
.cap { width: 11px; height: 25px; margin: 0 0 -2px auto; background: linear-gradient(#efefef, #aaa); display: grid; place-items: end center; padding-bottom: 2px; }
.cap svg { width: 7px; height: 8px; }
.pct { width: 60px; height: 20px; border: 1px solid #ccc; background: #fff; display: flex; align-items: center; padding-left: 2px; }
.pct span { width: 27px; height: 13px; background: #0a72cf; color: #124c86; line-height: 12px; letter-spacing: -0.75px; }
.pct svg { width: 10px; height: 6px; margin-left: 16px; }
.drop { display: flex; align-items: center; justify-content: space-between; flex: none; }
.drop b, .dd::after, .cbtn::after { content: ""; width: 0; height: 0; border: 3px solid transparent; border-top-color: #000; border-bottom: 0; margin-top: 1px; }
.w-ed { width: 39px; margin-right: 3px; }
.w-cl { width: 78px; margin-right: 1px; }
.dd { width: 11px; display: grid; place-items: center; }
.dim::after { border-top-color: #999; }
.s1 { width: 112px; margin-right: 8px; letter-spacing: -0.4px; } .s2 { width: 121px; margin-right: 8px; letter-spacing: -0.45px; } .s3 { width: 78px; margin-right: 8px; }
.s4 { width: 103px; margin-right: 8px; letter-spacing: -0.43px; } .s5 { width: 93px; margin-right: 8px; } .s6 { width: 99px; }
.combo { width: 178px; height: 19px; margin-left: 2px; border: 2px solid #696969; border-right-color: #aaa; border-bottom-color: #ccc; background: #fff; display: flex; align-items: center; }
.ras { width: 16px; height: 15px; margin-right: 4px; }
.combo span { flex: 1; padding-top: 1px; }
.cbtn { width: 15px; height: 15px; background: #f0f0f0; border: 1px solid #999; border-left-color: #ddd; display: grid; place-items: center; }
.cbtn::after { border-width: 4px 4px 0; }
.cls { margin-left: 2px; }
.poly { margin-left: -1px; }
.sel { margin-left: 1px; }

.work { height: 596px; flex: none; display: flex; }
.canvas { flex: 1; padding: 58px 0 0 480px; }
.map { width: 290px; height: 430px; }
.vscroll { width: 19px; border-left: 1px solid #ddd; padding: 0 3px 0 0; display: flex; flex-direction: column; align-items: center; background: #f1f1f1; }
.vscroll svg { width: 9px; height: 6px; margin: 6px 0 5px; }
.vscroll i { width: 14px; height: 560px; background: #cdcdcd; }

.viewbar { height: 20px; flex: none; display: flex; align-items: center; background: #f0f0f0; border: solid #fff; border-width: 1px 0 2px; border-top-color: #e6e6e6; }
.vb { width: 15px; height: 13px; display: grid; place-items: center; margin-top: -3px; }
.vb svg { width: 9px; height: 10px; }
.sel-view { width: 12px; margin-left: -1px; background: #b9dcf6; }
.vsep { width: 1px; height: 10px; background: #777; margin: -3px 5px 0 4px; }
.rf { margin-left: -1px; }
.rf svg { width: 10px; height: 9px; }
.lft { width: 6px; height: 9px; margin-left: 13px; }
.hthumb { width: 1086px; height: 14px; background: #cdcdcd; margin-left: 5px; }
.status { height: 20px; flex: none; background: #f0f0f0; padding: 2px 0 0 1108px; letter-spacing: -0.47px; }

.taskbar { height: 30px; flex: none; display: flex; background: #2d241c; color: #fff; }
.start { width: 31px; padding: 7px 0 0 5px; }
.start svg { width: 16px; height: 16px; }
.search { width: 257px; background: #f2f2f2; border: 1px solid #c4c0bc; border-width: 1px 1px 1px 0; display: flex; align-items: center; color: #333; font-size: 15px; }
.mag { width: 17px; height: 17px; margin: 0 11px 0 12px; }
.search span { flex: 1; letter-spacing: -0.45px; }
.olive { width: 50px; height: 28px; margin-right: 5px; }
.apps { display: flex; padding-left: 1px; }
.apps i { width: 37px; height: 30px; display: grid; place-items: center; background: linear-gradient(transparent, transparent) no-repeat 50% 100% / 28px 2px; }
.apps i svg { width: 16px; height: 16px; }
.apps .run { background-image: linear-gradient(#76b3e3, #76b3e3); }
.apps .act { background-color: #5a524b; background-size: 37px 2px; }
.apps .two { background-image: linear-gradient(90deg, #76b3e3 70%, #4d7ea6 70%); }
.pc text { font: bold 7.5px "Open Sans", sans-serif; fill: #fff; letter-spacing: 0; }
.tray { margin-left: auto; display: flex; align-items: center; }
.up { width: 12px; height: 8px; margin-right: 10px; }
.bat { width: 16px; height: 12px; margin-right: 10px; }
.tray span { width: 45px; letter-spacing: -0.8px; }
.note { width: 16px; height: 16px; }
.desk { width: 1px; height: 30px; background: #78716b; margin: 0 4px 0 20px; }

/* Floating panels over the map view */
.toc { position: absolute; left: 0; top: 128px; width: 213px; height: 565px; background: #f0f0f0; border: solid #000; border-width: 1px 2px 2px 0; border-top-color: #e4e4e4; padding: 3px 1px 0 0; display: flex; flex-direction: column; }
.ptitle { height: 19px; flex: none; background: linear-gradient(90deg, #9ebbdc, #b8d0ea); display: flex; justify-content: space-between; }
.ptitle span { margin-left: -2px; padding-top: 1px; letter-spacing: -0.35px; }
.ptitle svg { width: 30px; height: 12px; margin: 3px 1px 0 0; }
.ptools { height: 28px; flex: none; display: flex; align-items: center; background: linear-gradient(90deg, #fafafa, #f0f0f0); padding-top: 1px; }
.lt { width: 22px; height: 22px; display: grid; place-items: center; }
.lt svg { width: 16px; height: 16px; }
.on2 { width: 20px; background: #d5e8f8; border: 1px solid #4e97cf; border-left: 0; padding-right: 1px; }
.lsep { width: 1px; height: 13px; background: #aaa; margin: 0 2px; }
.tree { width: 209px; height: 511px; flex: none; background: #fff; border: 1px solid #828790; border-left: 0; padding: 1px 0; display: flex; flex-direction: column; }
.r { height: 18px; flex: none; display: flex; align-items: center; }
.g16 { width: 16px; height: 16px; }
.lay { margin-left: -4px; margin-right: 3px; }
.hl { background: #0a78d6; color: #fff; font-weight: 700; outline: 1px dotted #222; outline-offset: -1px; width: 39px; height: 18px; padding-left: 2px; line-height: 17px; letter-spacing: -0.6px; }
.ex { width: 9px; height: 9px; margin-top: 3px; }
.gap1 { margin: 0 5px 0 6px; }
.in { padding-left: 19px; }
.ck { width: 11px; height: 11px; margin: 0 8px; }
.val { padding-left: 74px; }
.ramp { display: flex; height: 72px; flex: none; padding-left: 51px; letter-spacing: -0.4px; }
.ramp i { width: 13px; height: 36px; margin: 0 5px 0 0; background: linear-gradient(#f0f0f0, #000); }
.ramp .col { background: linear-gradient(#f23c10, #ff9a00 25%, #f8ee00 50%, #20f010); }
.ramp span { display: block; margin-top: -3px; height: 39px; }
.tscroll { margin-top: auto; height: 17px; background: #f0f0f0; display: flex; align-items: center; justify-content: space-between; padding-right: 6px; }
.tscroll i { width: 134px; height: 15px; background: #cdcdcd; }
.tscroll svg { width: 6px; height: 9px; }

.atb { position: absolute; left: 1176px; top: 151px; width: 185px; height: 567px; background: #f0f0f0; border: 1px solid #ddd; border-width: 1px 0 2px 1px; border-bottom-color: #000; padding: 3px 0 0 1px; }
.atitle { height: 20px; background: linear-gradient(90deg, #c5d3e2, #dae7f4); display: flex; justify-content: space-between; padding: 1px 2px 0 4px; }
.atitle svg { width: 9px; height: 10px; margin-top: 3px; }
.alist { margin-top: 1px; height: 538px; background: #fff; border: 1px solid #828790; border-right: 0; padding: 1px 0; display: flex; flex-direction: column; }
.a { height: 18px; flex: none; display: flex; align-items: center; gap: 5px; letter-spacing: -0.35px; }
.a svg { width: 16px; height: 16px; }
.a .ex { width: 9px; height: 9px; margin-top: 3px; }
.l3 { padding-left: 80px; letter-spacing: -0.5px; }
.l2b { padding-left: 46px; letter-spacing: -0.5px; }
.wide { letter-spacing: -0.3px; }
.tight { letter-spacing: -0.65px; }
.l2 { padding-left: 27px; }
.l1 { padding-left: 8px; }
.a .ex + svg { margin-left: 1px; }
.ascroll { margin-top: auto; height: 16px; background: #f0f0f0; display: flex; align-items: center; padding: 0 5px 0 6px; }
.ascroll svg { width: 6px; height: 9px; }
.ascroll i { width: 88px; height: 15px; background: #cdcdcd; margin: 0 auto 0 6px; }
```
FILE: map.js
```js
// Canopy peaks: x, y, rx, ry, level (0 faint yellow, 1 orange, 2 red)
const peaks = [
  [175,246,3,3,1],[80,275,9,7,0],[163,288,4,3,0],[253,278,9,28,1],[251,254,3,7,2],[253,303,4,5,2],[265,320,4,4,1],[289,276,13,7,1],[292,279,8,4,2],
  [334,305,6,7,1],[334,307,3,4,2],[330,344,7,5,2],[335,355,4,3,2],[349,355,2,2,2],[380,358,9,6,0],[230,350,5,4,0],[215,362,5,4,0],[248,370,4,4,0],[135,350,4,3,0],
  [172,380,11,15,1],[183,400,4,4,1],[328,392,6,11,2],[340,384,4,3,2],[352,405,5,13,2],[345,435,14,15,2],[409,368,3,4,1],[421,398,7,6,2],[412,390,5,3,1],[423,419,4,4,2],
  [427,442,5,7,2],[424,466,8,5,2],[437,474,3,3,1],[509,467,9,9,2],[506,446,3,2,2],[587,503,5,5,1],[600,485,1,1,2],
  [214,436,14,10,1],[191,430,2,2,2],[232,448,7,5,1],[172,444,4,3,1],[257,512,6,9,1],[268,497,2,2,2],[278,530,4,3,2],[268,545,6,12,1],[266,563,8,8,2],
  [313,518,7,6,0],[300,563,8,5,1],[391,530,8,11,1],[392,553,7,9,1],[381,515,6,4,1],[417,520,2,2,2],[430,523,6,3,1],[431,552,9,7,2],[467,517,11,6,1],
  [178,556,9,9,1],[178,524,12,5,0],[425,601,4,5,1],[442,620,6,4,0],[449,641,7,9,1],[470,641,7,6,1],[283,638,6,8,1],[180,602,5,4,1],[201,608,3,3,2],[204,650,3,8,2],[117,608,2,2,2],
  [117,652,3,5,1],[78,686,6,9,1],[283,660,3,3,1],[151,691,9,7,0],[227,689,6,6,1],[180,660,3,3,2],[203,697,2,2,2],[117,700,2,2,2],[121,729,6,3,1],[186,735,8,8,2],
  [402,690,9,8,1],[404,690,4,4,2],[441,689,9,7,2],[449,677,5,6,2],[563,674,5,4,2],[564,692,5,8,0],[281,731,6,6,0],[239,760,7,6,0],[291,770,7,9,1],[398,774,9,6,0],[119,781,5,3,2],
  [205,781,2,2,2],[112,824,7,3,2],[122,811,2,2,2],[283,813,10,6,2],[400,850,10,9,1],[398,851,6,5,2],[360,860,5,3,2],[324,857,8,6,1],[445,850,6,6,1],[482,850,7,7,2],[252,857,5,4,1],[232,863,6,8,0],
  [451,884,3,3,1],[129,894,3,3,2],[270,890,3,3,2],[290,898,5,5,2],[211,902,3,3,2],[154,941,13,12,1],[284,942,6,9,2],[367,945,10,4,2],[374,932,3,9,2],[367,977,13,16,2],[400,931,6,6,2],
  [491,933,8,9,0],[488,975,11,11,2],[490,960,4,4,0],[285,979,11,9,1],[124,977,3,3,1],[196,985,2,2,2],[452,999,3,4,1],[109,1034,5,5,2],[154,1027,7,4,0],[233,1024,6,5,1],[254,1026,6,5,1],[256,1026,3,2,2],[245,1034,6,5,1],
  [281,1008,7,9,0],[293,1023,4,4,1],[371,1022,4,5,2],[438,1021,4,2,2],[525,1014,2,5,2],[332,1050,9,9,0],[326,1132,8,5,1],[491,1213,4,4,0],[548,147,14,11,1],[515,152,14,9,0],[310,58,12,5,0],[335,96,9,5,0],[235,84,7,4,0],[415,134,12,4,0],[485,165,14,5,0]
];
const NS = "http://www.w3.org/2000/svg";
function dot(parent, x, y, rx, ry, fill, opacity) {
  const e = document.createElementNS(NS, "ellipse");
  e.setAttribute("cx", x); e.setAttribute("cy", y);
  e.setAttribute("rx", rx); e.setAttribute("ry", ry);
  e.setAttribute("fill", fill); e.setAttribute("opacity", opacity);
  parent.appendChild(e);
}
const fringe = document.getElementById("fringe");
const cores = document.getElementById("cores");
for (const [x, y, rx, ry, level] of peaks) {
  const pad = rx < 3 ? 1 : 4.5;
  dot(fringe, x, y, rx + pad, ry + pad, level ? "#eaf000" : "#c8f500", level ? 0.95 : 0.75);
  if (level === 1) {
    dot(cores, x, y, rx, ry, "#ffb400", 0.9);
    if (rx > 3) dot(cores, x, y, rx * 0.55, ry * 0.55, "#f86a00", 0.9);
  }
  if (level === 2) {
    if (rx > 3) dot(cores, x, y, rx + 1.5, ry + 1.5, "#ff9400", 0.9);
    dot(cores, x, y, rx, ry, "#e81000", 1);
  }
}
```
